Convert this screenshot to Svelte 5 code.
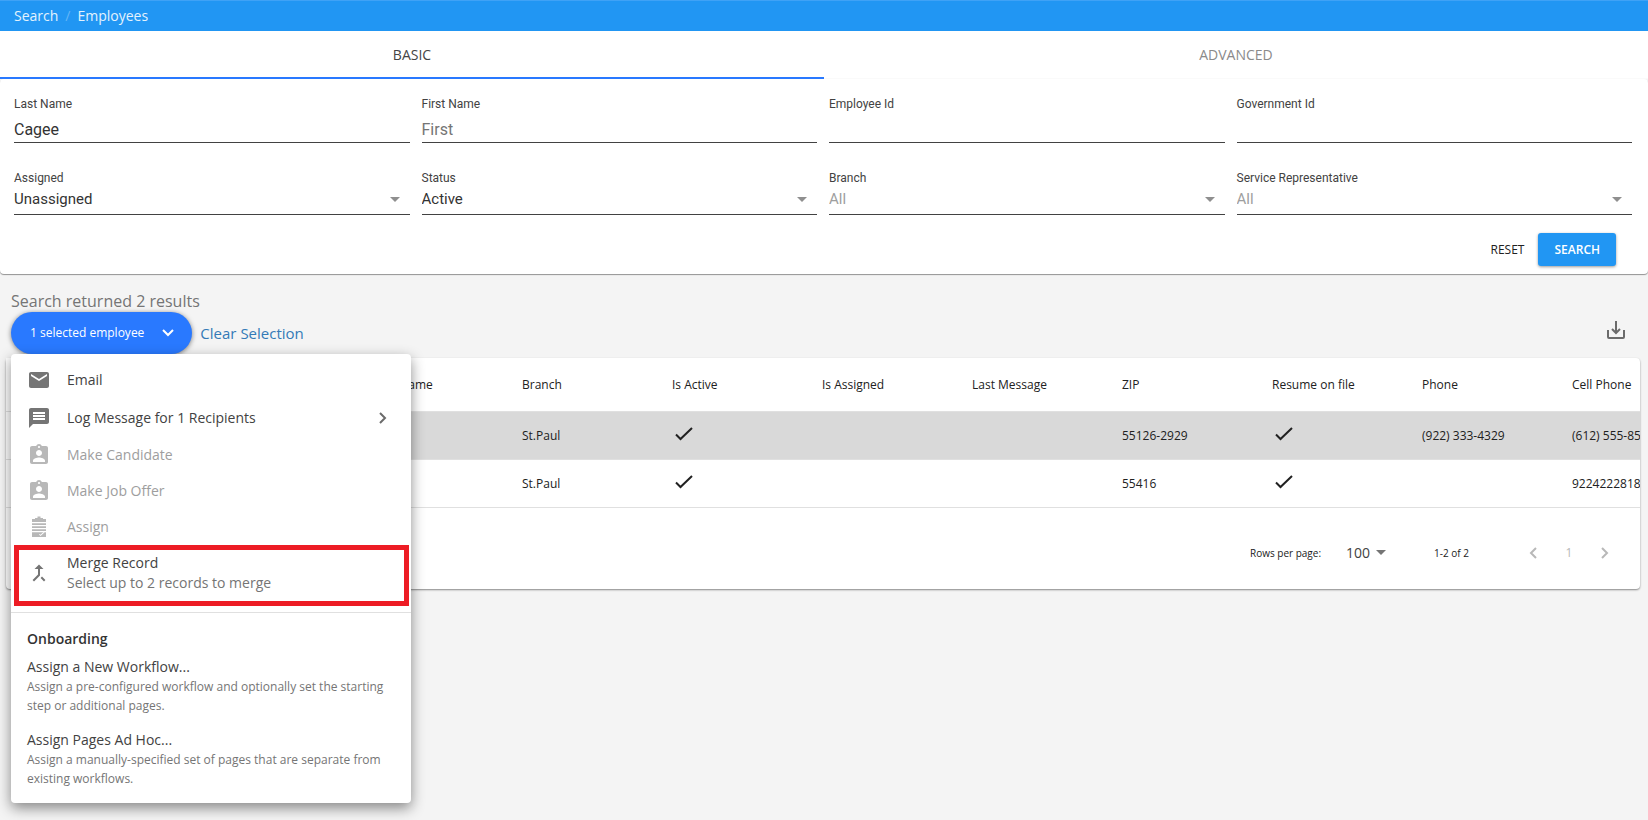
<script lang="ts">
  interface Field {
    id: string;
    label: string;
    value: string;
    placeholder?: string;
  }

  interface Employee {
    selected: boolean;
    branch: string;
    active: boolean;
    assigned: boolean;
    lastMessage: string;
    zip: string;
    resume: boolean;
    phone: string;
    cell: string;
  }

  let activeTab = "basic";

  let textFields: Field[] = [
    { id: "last-name", label: "Last Name", value: "Cagee" },
    { id: "first-name", label: "First Name", value: "", placeholder: "First" },
    { id: "employee-id", label: "Employee Id", value: "" },
    { id: "government-id", label: "Government Id", value: "" }
  ];

  let selectFields: Field[] = [
    { id: "assigned", label: "Assigned", value: "Unassigned" },
    { id: "status", label: "Status", value: "Active" },
    { id: "branch", label: "Branch", value: "All" },
    { id: "service-rep", label: "Service Representative", value: "All" }
  ];

  const columns = [
    "",
    "",
    "First Name",
    "Branch",
    "Is Active",
    "Is Assigned",
    "Last Message",
    "ZIP",
    "Resume on file",
    "Phone",
    "Cell Phone"
  ];

  let employees: Employee[] = [
    {
      selected: true,
      branch: "St.Paul",
      active: true,
      assigned: false,
      lastMessage: "",
      zip: "55126-2929",
      resume: true,
      phone: "(922) 333-4329",
      cell: "(612) 555-85"
    },
    {
      selected: false,
      branch: "St.Paul",
      active: true,
      assigned: false,
      lastMessage: "",
      zip: "55416",
      resume: true,
      phone: "",
      cell: "9224222818"
    }
  ];

  const badgeIcon =
    "M19 3h-4.18C14.4 1.84 13.3 1 12 1c-1.3 0-2.4.84-2.82 2H5c-1.1 0-2 .9-2 2v14c0 1.1.9 2 2 2h14c1.1 0 2-.9 2-2V5c0-1.100-.9-2-2-2zm-7 0c.55 0 1 .45 1 1s-.45 1-1 1-1-.45-1-1 .45-1 1-1zm0 4c1.660 0 3 1.340 3 3s-1.340 3-3 3-3-1.340-3-3 1.340-3 3-3zm6 12H6v-1.400c0-2 4-3.100 6-3.100s6 1.100 6 3.100V19z";

  const actions = [
    {
      label: "Email",
      icon: "M20 4H4c-1.100 0-1.990.9-1.990 2L2 18c0 1.100.9 2 2 2h16c1.100 0 2-.9 2-2V6c0-1.100-.9-2-2-2zm0 4l-8 5-8-5V6l8 5 8-5v2z"
    },
    {
      label: "Log Message for 1 Recipients",
      icon: "M20 2H4c-1.100 0-1.990.9-1.990 2L2 22l4-4h14c1.100 0 2-.9 2-2V4c0-1.100-.9-2-2-2zm-2 12H6v-2h12v2zm0-3H6V9h12v2zm0-3H6V6h12v2z",
      submenu: true
    },
    { label: "Make Candidate", icon: badgeIcon, disabled: true },
    { label: "Make Job Offer", icon: badgeIcon, disabled: true },
    {
      label: "Assign",
      icon: "M5 4h3V3h2.500V1.500h3V3H16v1h3v18H5zM5 7v1.200h14V7zM5 10v1.200h14V10zM5 13v1.200h14V13zM5 16v1.200h14V16zM12 19.500l1.500 1.500 4-3.500-.6-.7-3.400 2.900-.9-.8z",
      disabled: true
    }
  ];

  const workflows = [
    {
      title: "Assign a New Workflow...",
      text: "Assign a pre-configured workflow and optionally set the starting step or additional pages."
    },
    {
      title: "Assign Pages Ad Hoc...",
      text: "Assign a manually-specified set of pages that are separate from existing workflows."
    }
  ];

  function reset() {
    textFields = textFields.map((f) => ({ ...f, value: "" }));
  }

  function clearSelection() {
    employees = employees.map((e) => ({ ...e, selected: false }));
  }
</script>

<div class="app">
  <nav class="breadcrumb" aria-label="Breadcrumb">
    <a href="#search">Search</a>
    <span class="slash">/</span>
    <a href="#employees">Employees</a>
  </nav>

  <div class="tabs" role="tablist">
    <button type="button" role="tab" aria-selected={activeTab === "basic"} class:active={activeTab === "basic"} on:click={() => (activeTab = "basic")}>BASIC</button>
    <button type="button" role="tab" aria-selected={activeTab === "advanced"} class:active={activeTab === "advanced"} on:click={() => (activeTab = "advanced")}>ADVANCED</button>
  </div>

  <form class="filters" on:submit|preventDefault>
    <div class="fields">
      {#each textFields as f (f.id)}
        <div class="field">
          <label for={f.id}>{f.label}</label>
          <input id={f.id} type="text" autocomplete="off" placeholder={f.placeholder} bind:value={f.value} />
        </div>
      {/each}
      {#each selectFields as f (f.id)}
        <div class="field">
          <label for={f.id}>{f.label}</label>
          <div class="select">
            <select id={f.id} class:muted={f.value === "All"}>
              <option>{f.value}</option>
            </select>
            <svg viewBox="0 0 10 5" width="10" height="5"><path d="M0 0h10L5 5z" /></svg>
          </div>
        </div>
      {/each}
    </div>
    <div class="buttons">
      <button type="button" class="reset" on:click={reset}>RESET</button>
      <button type="submit" class="search">SEARCH</button>
    </div>
  </form>

  <main>
    <div class="summary">Search returned 2 results</div>
    <div class="toolbar">
      <div class="selection">
        <button type="button" class="pill" aria-haspopup="menu" aria-expanded="true">
          <span>1 selected employee</span>
          <svg viewBox="0 0 12 8" width="12" height="8"><path d="M1 1l5 5 5-5" /></svg>
        </button>
        <div class="menu">
          <div class="actions">
            {#each actions as a}
              <button type="button" class="action" disabled={a.disabled}>
                <svg class="icon" viewBox="0 0 24 24" width="24" height="24"><path fill-rule="evenodd" d={a.icon} /></svg>
                <span>{a.label}</span>
                {#if a.submenu}
                  <svg class="chevron" viewBox="0 0 8 12" width="8" height="12"><path d="M1 1l5 5-5 5" /></svg>
                {/if}
              </button>
            {/each}
            <button type="button" class="action merge">
              <svg class="icon" viewBox="0 0 24 24" width="24" height="24">
                <path d="M17 20.410L18.410 19 15 15.590 13.590 17 17 20.410zM7.500 8H11v5.590L5.590 19 7 20.410l6-6V8h3.500L12 3.500 7.500 8z" />
              </svg>
              <span>Merge Record<small>Select up to 2 records to merge</small></span>
            </button>
          </div>
          <div class="onboarding">
            <h2>Onboarding</h2>
            {#each workflows as w}
              <button type="button" class="workflow">
                <span>{w.title}</span>
                <small>{w.text}</small>
              </button>
            {/each}
          </div>
        </div>
      </div>
      <a class="clear" href="#clear" on:click|preventDefault={clearSelection}>Clear Selection</a>
      <button type="button" class="download" aria-label="Download">
        <svg viewBox="0 0 18 18" width="18" height="18">
          <path d="M1 9v7q0 1 1 1h14q1 0 1-1V9M9 0v12M5 8l4 4 4-4" />
        </svg>
      </button>
    </div>

    <section class="results">
      <div class="scroller">
        <table>
          <thead>
            <tr>
              <th class="check"></th>
              {#each columns as c}
                <th>{c}</th>
              {/each}
            </tr>
          </thead>
          <tbody>
            {#each employees as e}
              <tr class:selected={e.selected}>
                <td class="check"></td>
                {#each ["", "", "", e.branch, e.active, e.assigned, e.lastMessage, e.zip, e.resume, e.phone, e.cell] as cell}
                  <td>
                    {#if cell === true}
                      <svg class="tick" viewBox="0 0 24 24" width="24" height="24"><path d="M4 12.500l4.500 4.500L20 6" /></svg>
                    {:else if cell}
                      {cell}
                    {/if}
                  </td>
                {/each}
              </tr>
            {/each}
          </tbody>
        </table>
      </div>
      <div class="pager">
        <label for="page-size">Rows per page:</label>
        <div class="page-size">
          <select id="page-size">
            <option>100</option>
          </select>
          <svg viewBox="0 0 10 5" width="10" height="5"><path d="M0 0h10L5 5z" /></svg>
        </div>
        <span class="range">1-2 of 2</span>
        <button type="button" class="page" disabled aria-label="Previous page">
          <svg viewBox="0 0 8 12" width="8" height="12"><path d="M7 1L2 6l5 5" /></svg>
        </button>
        <button type="button" class="page" disabled>1</button>
        <button type="button" class="page" disabled aria-label="Next page">
          <svg viewBox="0 0 8 12" width="8" height="12"><path d="M1 1l5 5-5 5" /></svg>
        </button>
      </div>
    </section>
  </main>
</div>

<style>
  :global(body) {
    background: #f4f4f4;
    color: #212121;
    font: 14px/20px "Open Sans", "Noto Sans", sans-serif;
  }

  .app {
    min-height: 100vh;
  }

  button,
  select,
  input {
    margin: 0;
    padding: 0;
    border: 0;
    border-radius: 0;
    background: none;
    color: inherit;
    font: inherit;
    outline: 0;
  }

  button {
    cursor: pointer;
  }

  svg {
    flex: none;
    fill: currentColor;
  }

  .breadcrumb {
    display: flex;
    gap: 7px;
    align-items: center;
    height: 30px;
    padding: 0 14px;
    border-top: 1px solid #3fa2f6;
    background: #2196f3;
  }

  .breadcrumb a {
    color: #e3f2fd;
    text-decoration: none;
  }

  .slash {
    color: #64b5f6;
  }

  .tabs {
    display: grid;
    grid-template-columns: 1fr 1fr;
    background: #fff;
  }

  .tabs button {
    height: 48px;
    border-bottom: 1px solid #fafafa;
    color: #8a8a8a;
  }

  .tabs .active {
    border-color: #2979ff;
    box-shadow: inset 0 -1px #2979ff;
    color: #444;
  }

  .filters {
    padding: 16px 16px 8px 14px;
    border-radius: 4px;
    background: #fff;
    box-shadow: 0 1px 1px rgba(0, 0, 0, 0.4);
    color: #424242;
    font-family: Roboto, sans-serif;
  }

  .fields {
    display: grid;
    grid-template-columns: repeat(4, 1fr);
    gap: 26px 12px;
  }

  .field label {
    display: block;
    font-size: 12px;
    line-height: 18px;
  }

  .field input {
    display: block;
    box-sizing: border-box;
    width: 100%;
    height: 30px;
    padding-top: 4px;
    border-bottom: 1px solid #424242;
    color: #333;
    font-size: 16px;
  }

  .field input::placeholder {
    color: #757575;
    opacity: 1;
  }

  .select {
    display: flex;
    align-items: center;
    height: 24px;
    padding-bottom: 3px;
    border-bottom: 1px solid #424242;
    color: #333;
  }

  .select select {
    flex: 1;
    width: 100%;
    margin-right: -20px;
    padding-right: 20px;
    font-size: 15px;
    line-height: 24px;
  }

  select {
    appearance: none;
  }

  .select .muted {
    color: #9e9e9e;
  }

  .select svg {
    margin-right: 10px;
    color: #8f8f8f;
    pointer-events: none;
  }

  .buttons {
    display: flex;
    gap: 14px;
    justify-content: flex-end;
    padding: 18px 16px 0 0;
    font: 600 12px/33px "Open Sans", sans-serif;
  }

  .reset {
    color: #212121;
    font-weight: 400;
  }

  .search {
    padding: 0 16px;
    border-radius: 3px;
    background: #2196f3;
    box-shadow: 0 1px 3px rgba(0, 0, 0, 0.4);
    color: #fff;
  }

  main {
    padding: 16px 8px 0 6px;
  }

  .summary {
    padding-left: 5px;
    color: #757575;
    font-size: 16px;
    line-height: 22px;
  }

  .toolbar {
    display: flex;
    align-items: center;
    padding: 0 15px 4px 5px;
  }

  .selection {
    position: relative;
  }

  .pill {
    display: flex;
    gap: 18px;
    align-items: center;
    height: 42px;
    padding: 0 18px 0 19px;
    border-radius: 21px;
    background: #2979ff;
    box-shadow: 0 1px 5px rgba(0, 0, 0, 0.5);
    color: #fff;
    font-size: 12px;
  }

  .pill svg,
  .chevron,
  .page svg,
  .download svg {
    fill: none;
    stroke: currentColor;
    stroke-width: 2;
  }

  .clear {
    margin: 0 auto 0 8px;
    color: #337ab7;
    font-size: 15px;
    text-decoration: none;
  }

  .download {
    display: flex;
    padding-bottom: 6px;
    color: #6b6b6b;
  }

  .menu {
    position: absolute;
    top: 100%;
    left: 0;
    z-index: 1;
    width: 400px;
    border-radius: 4px;
    background: #fff;
    box-shadow: 0 5px 14px rgba(0, 0, 0, 0.45);
  }

  .actions {
    padding: 7px 2px 6px 3px;
    border-bottom: 1px solid #e0e0e0;
  }

  .action {
    display: flex;
    gap: 16px;
    align-items: center;
    width: 100%;
    height: 38px;
    padding: 0 22px 0 13px;
    color: #424242;
    text-align: left;
  }

  .action:disabled {
    height: 36px;
    color: #9e9e9e;
  }

  .action .icon {
    color: #757575;
  }

  .action:disabled .icon {
    color: #b8b8b8;
  }

  .chevron {
    margin-left: auto;
    color: #6b6b6b;
  }

  .merge {
    box-sizing: border-box;
    height: 61px;
    padding: 0 10px 5px 8px;
    border: 5px solid #ed1c24;
  }

  .merge small {
    display: block;
    color: #757575;
    font-size: 14px;
  }

  .onboarding {
    padding: 15px 16px 15px;
  }

  h2 {
    margin: 0 0 6px;
    color: #333;
    font-size: 14px;
    font-weight: 600;
    line-height: 22px;
  }

  .workflow {
    display: block;
    width: 100%;
    line-height: 21px;
    text-align: left;
    color: #424242;
  }

  .workflow + .workflow {
    margin-top: 14px;
  }

  .workflow small {
    display: block;
    color: #757575;
    font-size: 12px;
    line-height: 19px;
  }

  .results {
    border-radius: 4px;
    background: #fff;
    box-shadow: 0 1px 2px rgba(0, 0, 0, 0.45);
  }

  .scroller {
    overflow: hidden;
  }

  table {
    width: 1700px;
    table-layout: fixed;
    border-collapse: collapse;
    font-size: 12px;
  }

  th,
  td {
    width: 150px;
    height: 48px;
    padding: 2px 0 0 16px;
    box-sizing: border-box;
    border-bottom: 1px solid #e0e0e0;
    text-align: left;
    font-weight: 400;
  }

  th {
    height: 53px;
  }

  .check {
    width: 50px;
    background: #fff;
  }

  .selected {
    background: #d9d9d9;
  }

  .tick {
    display: block;
    margin-bottom: 4px;
    fill: none;
    stroke: currentColor;
    stroke-width: 2;
  }

  .pager {
    display: flex;
    align-items: center;
    justify-content: flex-end;
    height: 81px;
    padding-right: 17px;
    padding-top: 9px;
    box-sizing: border-box;
    font-size: 10px;
  }

  .page-size {
    display: flex;
    align-items: center;
    margin: 0 48px 0 25px;
    color: #424242;
    font-size: 14px;
  }

  .page-size select {
    width: 46px;
    margin-right: -16px;
  }

  .page-size svg {
    color: #757575;
    pointer-events: none;
  }

  .range {
    margin-right: 46px;
  }

  .page {
    display: flex;
    align-items: center;
    justify-content: center;
    width: 36px;
    color: #b8b8b8;
    font-size: 12px;
  }
</style>
